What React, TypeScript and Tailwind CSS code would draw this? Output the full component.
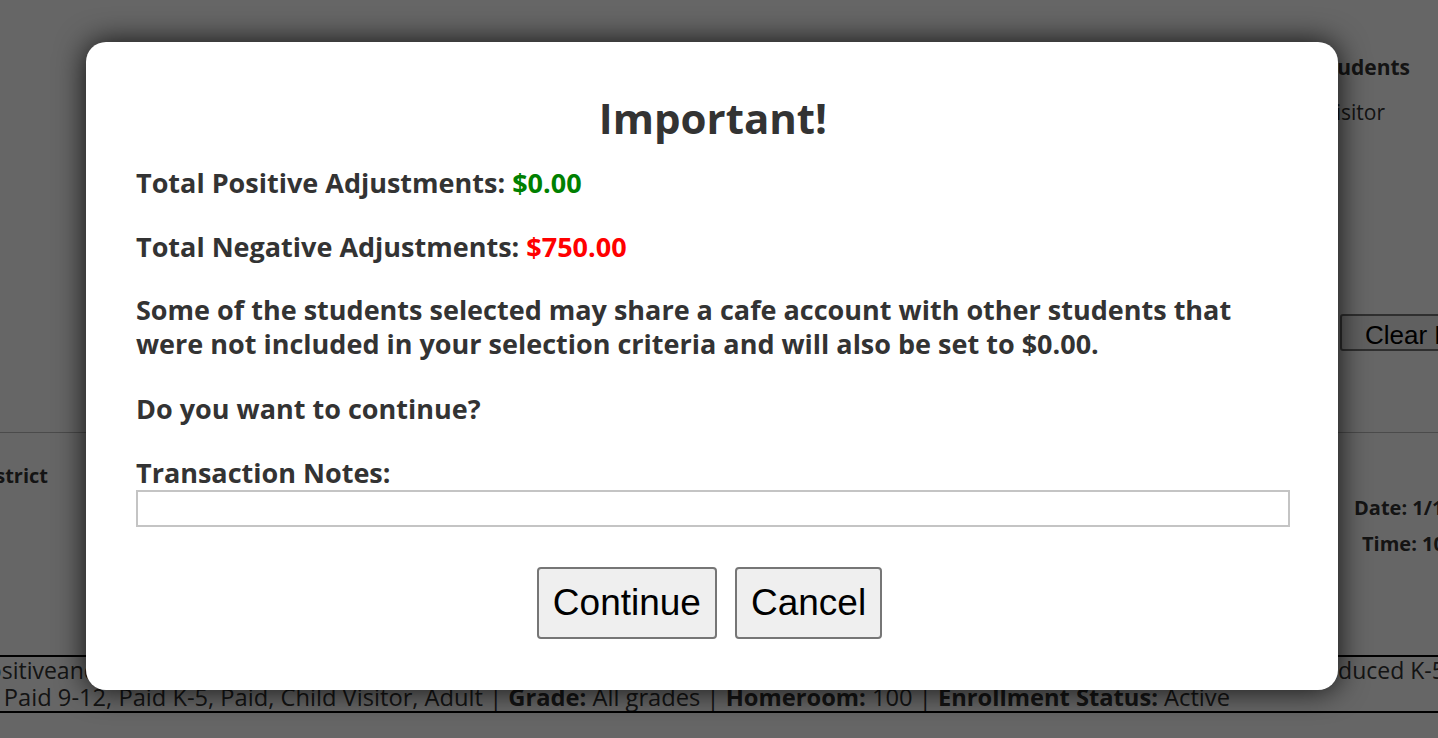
import React from "react";

const font = { fontFamily: '"Open Sans", "Noto Sans", sans-serif' };
const arial = { fontFamily: '"Liberation Sans", Arial, sans-serif' };

export default function App() {
  return (
    <div className="relative h-[738px] w-[1438px] overflow-hidden bg-white text-[#333]" style={font}>
      {/* background page */}
      <div className="flex h-[432px] flex-col whitespace-nowrap pt-[52px] text-[21px] text-[#333]">
        <div className="flex justify-end pr-[28px] font-bold">Eligible Students</div>
        <div className="mt-[13px] flex justify-end pr-[53px]">Child Visitor</div>
        <div className="mt-[186px] flex pl-[1340px]">
          <button className="h-[37px] shrink-0 whitespace-nowrap rounded-[3px] border-2 border-[#767676] bg-[#efefef] px-[23px] text-[26px] text-black" style={arial}>
            Clear Filters
          </button>
        </div>
      </div>
      <div className="h-px bg-[#bbb]" />
      <div className="flex h-[222px] flex-col whitespace-nowrap pt-[28px] text-[20px] font-bold">
        <div className="flex justify-end pr-[1390px]">School District</div>
        <div className="mt-[2px] pl-[1354px]">Date: 1/15/2020</div>
        <div className="mt-[6px] pl-[1362px]">Time: 10:42 AM</div>
      </div>
      <div className="h-[58px] overflow-hidden whitespace-nowrap border-y-2 border-black text-[23px] leading-[27px]">
        <div className="flex">
          <div className="-ml-[26px] w-[1337px] shrink-0">PositiveandNegativeAdjustments Report</div>
          <div className="shrink-0">Reduced K-5, Free K-5</div>
        </div>
        <div className="flex justify-end pr-[208px] text-[23.7px]">
          <span>
            Reduced 9-12, Paid 9-12, Paid K-5, Paid, Child Visitor, Adult | <b>Grade:</b> All grades | <b>Homeroom:</b> 100 | <b>Enrollment Status:</b> Active
          </span>
        </div>
      </div>

      {/* overlay */}
      <div className="absolute inset-0 bg-black/60">
        <div className="ml-[86px] mt-[42px] h-[648px] w-[1252px] rounded-[20px] bg-white pl-[50px] pr-[48px] pt-[46px] text-[27px] font-bold leading-[34px] text-[#333] shadow-[0_0_30px_rgba(0,0,0,0.85)]">
          <h1 className="text-center text-[42px] leading-[60px] font-bold">Important!</h1>
          <p className="mt-[18px]">
            Total Positive Adjustments: <span className="text-[#008000]">$0.00</span>
          </p>
          <p className="mt-[30px]">
            Total Negative Adjustments: <span className="text-[#ff0000]">$750.00</span>
          </p>
          <p className="mt-[29px]">
            Some of the students selected may share a cafe account with other students that were not included in your selection criteria and will also be set to $0.00.
          </p>
          <p className="mt-[31px]">Do you want to continue?</p>
          <p className="mt-[30px]">Transaction Notes:</p>
          <input className="block h-[37px] w-full border-2 border-[#c4c4c4] bg-white outline-none" />
          <div className="mt-[40px] flex justify-center gap-[18px] pr-[7px]" style={arial}>
            <button className="h-[72px] rounded-[4px] border-2 border-[#767676] bg-[#efefef] px-[14px] text-[37px] font-normal text-black">Continue</button>
            <button className="h-[72px] rounded-[4px] border-2 border-[#767676] bg-[#efefef] px-[14px] text-[37px] font-normal text-black">Cancel</button>
          </div>
        </div>
      </div>
    </div>
  );
}
